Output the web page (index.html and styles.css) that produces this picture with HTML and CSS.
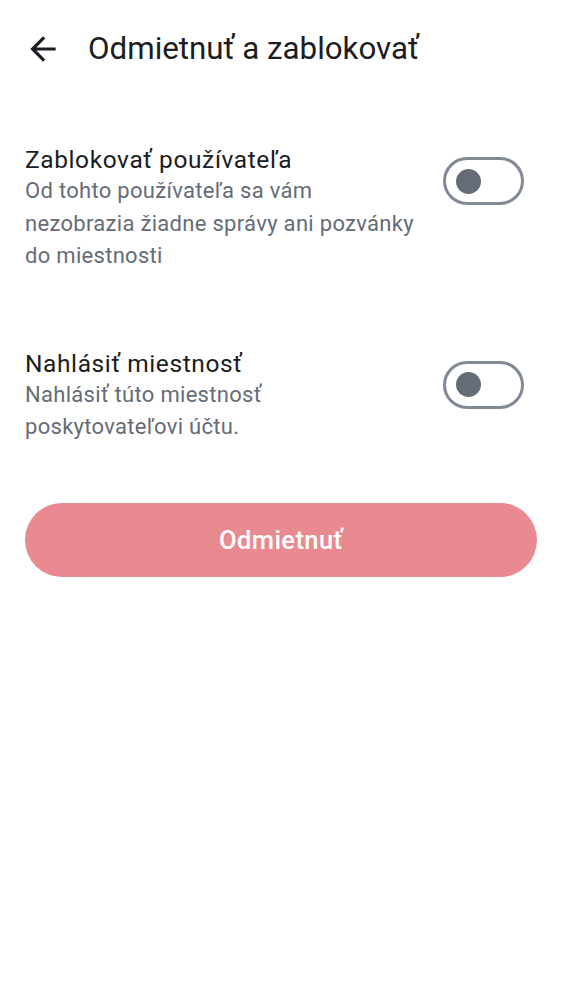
FILE: index.html
```html
<!DOCTYPE html>
<html lang="sk">
<head>
<meta charset="utf-8">
<link rel="stylesheet" href="styles.css">
</head>
<body>
<div class="screen">
  <header class="topbar">
    <svg class="back" viewBox="0 0 24 24" width="38" height="38"><path d="M20 11H7.83l5.59-5.59L12 4l-8 8 8 8 1.41-1.41L7.83 13H20v-2z"/></svg>
    <h1 class="title">Odmietnuť a zablokovať</h1>
  </header>
  <div class="row row-first">
    <div class="texts">
      <div class="row-title">Zablokovať používateľa</div>
      <div class="row-sub">Od tohto používateľa sa vám<br>nezobrazia žiadne správy ani pozvánky<br>do miestnosti</div>
    </div>
    <div class="switch"><div class="knob"></div></div>
  </div>
  <div class="row row-second">
    <div class="texts">
      <div class="row-title">Nahlásiť miestnosť</div>
      <div class="row-sub">Nahlásiť túto miestnosť<br>poskytovateľovi účtu.</div>
    </div>
    <div class="switch"><div class="knob"></div></div>
  </div>
  <div class="actions">
    <button class="btn">Odmietnuť</button>
  </div>
</div>
</body>
</html>
```
FILE: styles.css
```css
html, body {
  margin: 0;
  padding: 0;
  background: #ffffff;
}
.screen {
  width: 562px;
  height: 1000px;
  font-family: Roboto, "Noto Sans", sans-serif;
  color: #1b1d22;
}
.topbar {
  display: flex;
  align-items: center;
  height: 38px;
  padding: 30px 0 0 24px;
}
.back {
  fill: #1b1d22;
  flex: none;
}
.title {
  margin: 0 0 0 26px;
  font-size: 31.3px;
  font-weight: 400;
  line-height: 38px;
  color: #1b1d22;
}
.row {
  display: flex;
  align-items: flex-start;
  gap: 12px;
  padding: 0 38px 0 25px;
}
.row-first { margin-top: 77px; }
.row-second { margin-top: 76px; }
.texts {
  flex: 1;
  min-width: 0;
  white-space: nowrap;
}
.row-title {
  font-size: 24.5px;
  line-height: 30px;
  letter-spacing: 0.6px;
  color: #1b1d22;
}
.row-sub {
  font-size: 22px;
  line-height: 32.5px;
  color: #656c77;
  letter-spacing: 0.3px;
}
.switch {
  flex: none;
  margin-top: 12px;
  height: 42px;
  width: 65px;
  border: 3px solid #818a95;
  border-radius: 24px;
  display: flex;
  align-items: center;
  padding-left: 10px;
  box-sizing: content-box;
}
.knob {
  width: 25px;
  height: 25px;
  border-radius: 50%;
  background: #656c77;
}
.actions {
  padding: 59px 25px 0 25px;
}
.btn {
  display: block;
  width: 100%;
  height: 74px;
  border: none;
  border-radius: 37px;
  background: #e98a91;
  color: #ffffff;
  font-family: Roboto, "Noto Sans", sans-serif;
  font-size: 25.5px;
  font-weight: 500;
  letter-spacing: 0.4px;
}
```
